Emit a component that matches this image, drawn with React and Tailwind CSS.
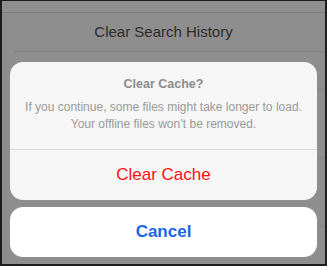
export default function App() {
  const font = { fontFamily: '"Liberation Sans", Arial, sans-serif' };
  return (
    <div className="w-[327px] h-[266px] overflow-hidden" style={font}>
      <div className="relative w-full h-full bg-[#8e8e8e] border-l-2 border-r-2 border-t border-b-2 border-[#1c1c1c]">
        <div className="flex flex-col">
          <div className="h-[12px] border-b border-[#7d7d7d]" />
          <div className="h-[39px] flex items-center justify-center text-[15px] text-[#2b2b2b] border-b border-[#808080] ml-[12px]">
            <span className="-ml-[12px]">Clear Search History</span>
          </div>
          <div className="h-[38px] border-b border-[#858585] ml-[12px]" />
          <div className="h-[68px] border-b border-[#858585] ml-[12px]" />
          <div className="h-[69px] border-b border-[#858585] ml-[12px]" />
        </div>
        <div className="absolute left-[8px] right-[8px] top-[61px] flex flex-col gap-[7px]">
          <div className="rounded-[13px] bg-[#f6f6f6] overflow-hidden">
            <div className="h-[88px] flex flex-col items-center pt-[15px] border-b border-[#dadada]">
              <div className="text-[12.5px] leading-[15px] font-bold text-[#8c8c8c]">Clear Cache?</div>
              <div className="mt-[7px] text-[12px] leading-[17px] text-[#9a9a9a] text-center">
                If you continue, some files might take longer to load.
                <br />
                Your offline files won’t be removed.
              </div>
            </div>
            <div className="h-[50px] flex items-center justify-center text-[17px] text-[#fe0f0f]">
              Clear Cache
            </div>
          </div>
          <div className="h-[50px] rounded-[13px] bg-white flex items-center justify-center text-[17px] font-bold text-[#1a66e8]">
            Cancel
          </div>
        </div>
      </div>
    </div>
  );
}
